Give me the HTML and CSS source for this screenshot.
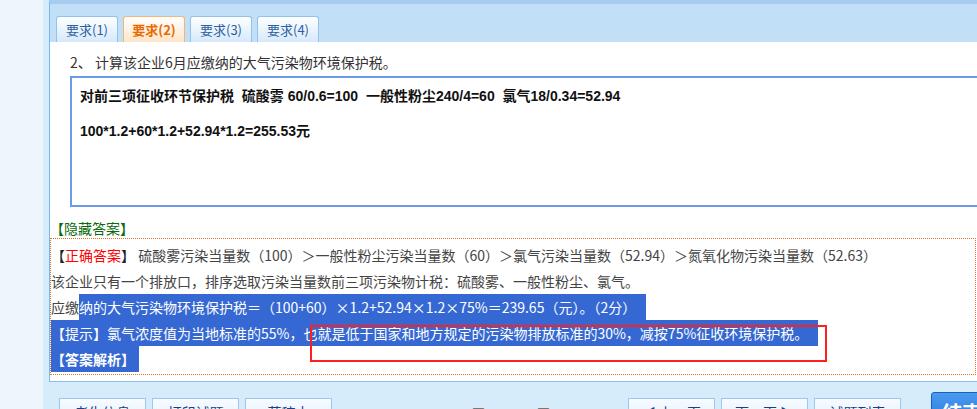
FILE: index.html
```html
<!DOCTYPE html>
<html lang="zh-CN">
<head>
  <meta charset="UTF-8">
  <title>要求(2)</title>
  <link rel="stylesheet" href="styles.css">
</head>
<body>
  <div class="page">
    <div class="side"></div>
    <div class="main">
      <div class="panel">
        <div class="tabs">
          <div class="tab">要求(1)</div>
          <div class="tab active">要求(2)</div>
          <div class="tab">要求(3)</div>
          <div class="tab">要求(4)</div>
        </div>

        <div class="content">
          <div class="question">2、 计算该企业6月应缴纳的大气污染物环境保护税。</div>
          <div class="answer-box">
            <div class="answer-line">对前三项征收环节保护税&nbsp; 硫酸雾 60/0.6=100&nbsp; 一般性粉尘240/4=60&nbsp; 氯气18/0.34=52.94</div>
            <div class="answer-line">100*1.2+60*1.2+52.94*1.2=255.53元</div>
          </div>

          <div class="hide-link">【隐藏答案】</div>

          <div class="solution">
            <div class="line">
              <span class="bracket">【</span><span class="red">正确答案</span><span class="bracket">】</span>
              硫酸雾污染当量数（100）＞一般性粉尘污染当量数（60）＞氯气污染当量数（52.94）＞氮氧化物污染当量数（52.63）
            </div>
            <div class="line">该企业只有一个排放口，排序选取污染当量数前三项污染物计税：硫酸雾、一般性粉尘、氯气。</div>
            <div class="line">应缴<span class="sel">纳的大气污染物环境保护税＝（100+60）×1.2+52.94×1.2×75%＝239.65（元）。（2分）</span></div>
            <div class="line"><span class="sel">【提示】氯气浓度值为当地标准的55%，也就是低于国家和地方规定的污染物排放标准的30%，减按75%征收环境保护税。</span></div>
            <div class="line"><span class="sel bold">【答案解析】</span></div>
            <div class="mark"></div>
          </div>
        </div>
      </div>

      <div class="toolbar">
        <div class="btn">考生信息</div>
        <div class="btn">打印试题</div>
        <div class="btn">草稿本</div>
        <div class="checks">
          <label><span class="box"></span>收藏本题</label><label><span class="box"></span>标记本题</label>
        </div>
        <div class="btn">◀ 上一页</div>
        <div class="btn">下一页 ▶</div>
        <div class="btn">试题列表</div>
        <div class="end-btn">结束</div>
      </div>
    </div>
  </div>
</body>
</html>
```

FILE: styles.css
```css
body {
  margin: 0;
  overflow: hidden;
  background-color: #eef5fd;
  font-family: "Noto Sans CJK SC", sans-serif;
  font-size: 14px;
  color: #333;
}

.page {
  display: flex;
  height: 409px;
}

.side {
  width: 43px;
  flex: none;
}

.main {
  flex: none;
  width: 1000px;
  padding-left: 6px;
  background-color: #d7ecfb;
}

.panel {
  background-color: #fff;
  border-left: 1px solid #7db6e8;
  border-bottom: 1px solid #8cc0ec;
  border-top: 4px solid #a6cdf0;
  padding-bottom: 6px;
}

.tabs {
  display: flex;
  align-items: flex-end;
  gap: 5px;
  height: 38px;
  padding-left: 6px;
  background-color: #c1dff6;
}

.tab {
  width: 60px;
  height: 25px;
  line-height: 25px;
  text-align: center;
  font-size: 13px;
  color: #2d5f9e;
  border: 1px solid #93c2ec;
  border-bottom: none;
  border-radius: 3px 3px 0 0;
  background: linear-gradient(#ffffff, #d5e9fb);
}

.tab.active {
  color: #e86a00;
  font-weight: bold;
  border-color: #f2b677;
  background: linear-gradient(#ffffff, #fde5c8);
}

.content {
  padding-top: 10px;
}

.question {
  line-height: 20px;
  padding-left: 20px;
}

.answer-box {
  margin: 4px 0 0 20px;
  width: 940px;
  height: 111px;
  border: 2px solid #6a9be8;
  padding: 8px 8px;
  font-family: "Liberation Sans", "Noto Sans CJK SC", sans-serif;
  font-weight: bold;
  color: #111;
}

.answer-line {
  line-height: 20px;
  margin-bottom: 15px;
}

.hide-link {
  margin-top: 11px;
  line-height: 20px;
  color: #0a6a0a;
}

.solution {
  position: relative;
  width: 924px;
  border: 1px dotted #e0702a;
  padding: 3px 0 2px 0;
  color: #444;
}

.line {
  line-height: 26px;
  white-space: nowrap;
}

.bracket {
  color: #222;
}

.red {
  color: #ff0000;
}

.sel {
  display: inline-block;
  background-color: #3568d2;
  color: #fff;
  padding-right: 10px;
}

.bold {
  font-weight: bold;
  padding-right: 4px;
}

.mark {
  position: absolute;
  left: 259px;
  top: 86px;
  width: 513px;
  height: 33px;
  border: 2px solid #ff1f1f;
}

.toolbar {
  display: flex;
  align-items: flex-start;
  padding: 16px 0 0 10px;
}

.btn {
  width: 85px;
  height: 26px;
  margin-right: 6px;
  line-height: 26px;
  text-align: center;
  font-size: 14px;
  color: #1b3c8c;
  border: 1px solid #9cc8ee;
  background: linear-gradient(#f6fbff, #e2f1fd);
}

.checks {
  display: flex;
  margin: 7px 26px 0 134px;
  font-size: 13px;
  color: #222;
}

.checks label {
  display: flex;
  align-items: center;
}

.box {
  width: 11px;
  height: 11px;
  border: 1px solid #777;
  border-radius: 2px;
  background-color: #fff;
}

.end-btn {
  margin-left: 24px;
  margin-top: -6px;
  width: 80px;
  height: 40px;
  line-height: 40px;
  padding-left: 10px;
  font-size: 20px;
  font-weight: bold;
  color: #fff;
  border: 1px solid #1a5fc0;
  border-radius: 3px;
  background: linear-gradient(#4a9af0, #1e6fd8);
}
```
